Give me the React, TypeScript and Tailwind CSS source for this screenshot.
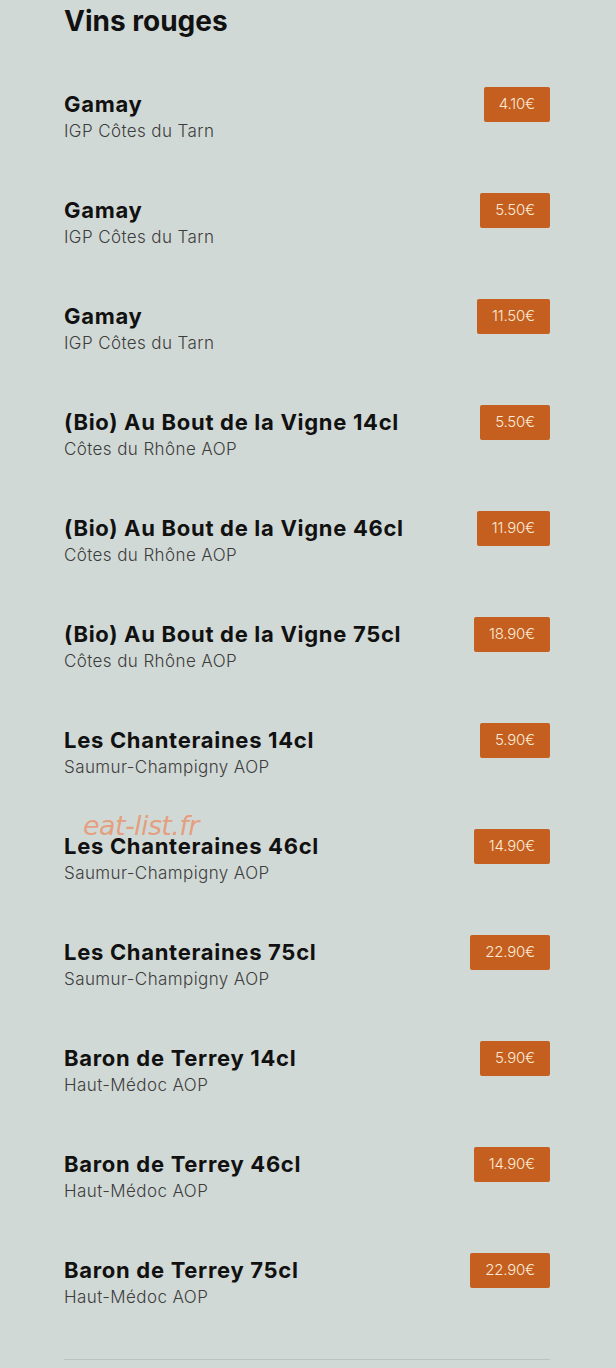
import React from "react";

const items: [string, string, string][] = [
  ["Gamay", "IGP Côtes du Tarn", "4.10€"],
  ["Gamay", "IGP Côtes du Tarn", "5.50€"],
  ["Gamay", "IGP Côtes du Tarn", "11.50€"],
  ["(Bio) Au Bout de la Vigne 14cl", "Côtes du Rhône AOP", "5.50€"],
  ["(Bio) Au Bout de la Vigne 46cl", "Côtes du Rhône AOP", "11.90€"],
  ["(Bio) Au Bout de la Vigne 75cl", "Côtes du Rhône AOP", "18.90€"],
  ["Les Chanteraines 14cl", "Saumur-Champigny AOP", "5.90€"],
  ["Les Chanteraines 46cl", "Saumur-Champigny AOP", "14.90€"],
  ["Les Chanteraines 75cl", "Saumur-Champigny AOP", "22.90€"],
  ["Baron de Terrey 14cl", "Haut-Médoc AOP", "5.90€"],
  ["Baron de Terrey 46cl", "Haut-Médoc AOP", "14.90€"],
  ["Baron de Terrey 75cl", "Haut-Médoc AOP", "22.90€"],
];

export default function App() {
  return (
    <div className="relative min-h-[1368px] w-[616px] overflow-hidden bg-[#d1d9d6] font-['Inter',sans-serif]">
      <div className="pl-[64px] pr-[66px]">
        <div className="h-[87px]">
          <h1 className="text-[28px] font-bold leading-[42px] tracking-[0px] text-[#111]">Vins rouges</h1>
        </div>
        {items.map(([name, sub, price], i) => (
          <div key={i} className="flex h-[106px] items-start justify-between">
            <div>
              <div className="text-[22px] font-bold leading-[34px] tracking-[0.7px] text-[#111]">{name}</div>
              <div className="text-[17px] font-light leading-[21px] tracking-[0.4px] text-[#3d3d3d]">{sub}</div>
            </div>
            <div className="flex h-[35px] items-center rounded-[2px] bg-[#c45f1f] px-[15px] text-[15px] font-light tracking-[-0.2px] text-[#fbead6]">
              {price}
            </div>
          </div>
        ))}
        <div className="h-px bg-[#b9c3c0]" />
      </div>
      <div className="absolute left-[83px] top-[807px] font-['DejaVu_Sans',sans-serif] text-[27px] italic leading-[38px] text-[#ea9068]/80 tracking-[-0.6px]">
        eat-list.fr
      </div>
    </div>
  );
}
